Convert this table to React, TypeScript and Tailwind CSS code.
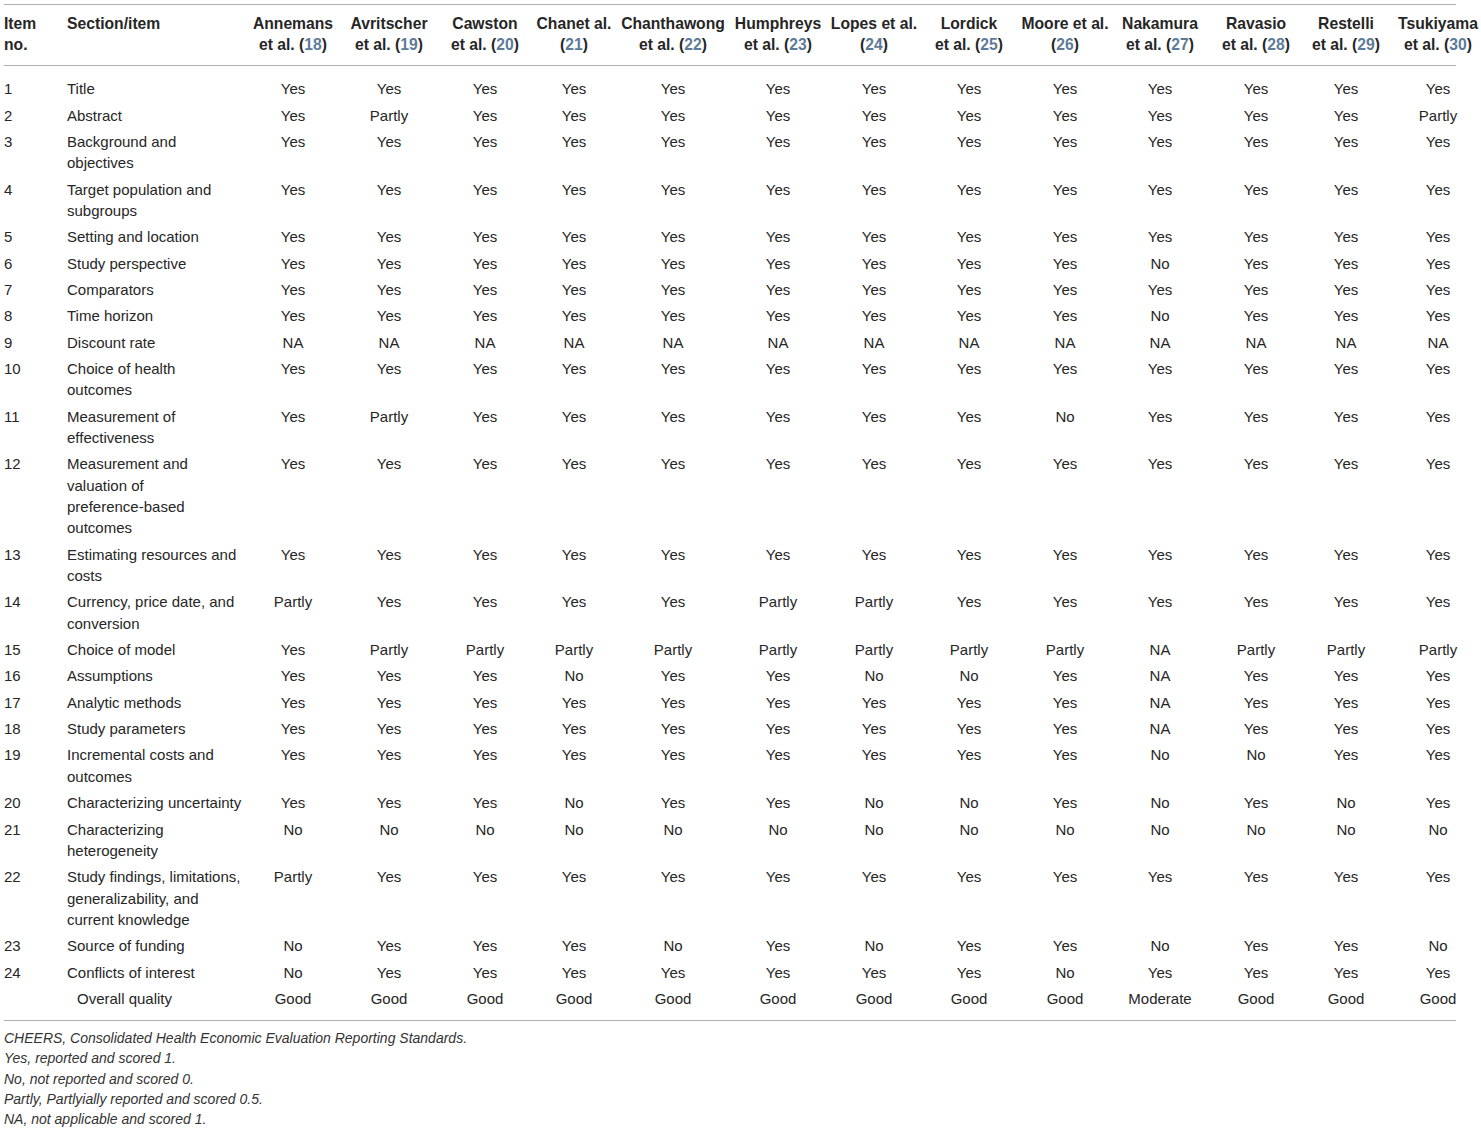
const studies: { name: string; cite: string; ref: string }[] = [
  { name: "Annemans", cite: "et al. (", ref: "18" },
  { name: "Avritscher", cite: "et al. (", ref: "19" },
  { name: "Cawston", cite: "et al. (", ref: "20" },
  { name: "Chanet al.", cite: "(", ref: "21" },
  { name: "Chanthawong", cite: "et al. (", ref: "22" },
  { name: "Humphreys", cite: "et al. (", ref: "23" },
  { name: "Lopes et al.", cite: "(", ref: "24" },
  { name: "Lordick", cite: "et al. (", ref: "25" },
  { name: "Moore et al.", cite: "(", ref: "26" },
  { name: "Nakamura", cite: "et al. (", ref: "27" },
  { name: "Ravasio", cite: "et al. (", ref: "28" },
  { name: "Restelli", cite: "et al. (", ref: "29" },
  { name: "Tsukiyama", cite: "et al. (", ref: "30" },
];

// widths picked so the column centres land where the reference has them
const colWidths = [63, 178, 96, 96, 96, 82, 116, 94, 98, 92, 100, 90, 102, 78, 106];

const Y = "Yes";
const N = "No";
const P = "Partly";
const NA = "NA";
const all = (v: string) => Array(13).fill(v) as string[];

const rows: { no: string; item: string[]; vals: string[] }[] = [
  { no: "1", item: ["Title"], vals: all(Y) },
  { no: "2", item: ["Abstract"], vals: [Y, P, Y, Y, Y, Y, Y, Y, Y, Y, Y, Y, P] },
  { no: "3", item: ["Background and", "objectives"], vals: all(Y) },
  { no: "4", item: ["Target population and", "subgroups"], vals: all(Y) },
  { no: "5", item: ["Setting and location"], vals: all(Y) },
  { no: "6", item: ["Study perspective"], vals: [Y, Y, Y, Y, Y, Y, Y, Y, Y, N, Y, Y, Y] },
  { no: "7", item: ["Comparators"], vals: all(Y) },
  { no: "8", item: ["Time horizon"], vals: [Y, Y, Y, Y, Y, Y, Y, Y, Y, N, Y, Y, Y] },
  { no: "9", item: ["Discount rate"], vals: all(NA) },
  { no: "10", item: ["Choice of health", "outcomes"], vals: all(Y) },
  { no: "11", item: ["Measurement of", "effectiveness"], vals: [Y, P, Y, Y, Y, Y, Y, Y, N, Y, Y, Y, Y] },
  { no: "12", item: ["Measurement and", "valuation of", "preference-based", "outcomes"], vals: all(Y) },
  { no: "13", item: ["Estimating resources and", "costs"], vals: all(Y) },
  { no: "14", item: ["Currency, price date, and", "conversion"], vals: [P, Y, Y, Y, Y, P, P, Y, Y, Y, Y, Y, Y] },
  { no: "15", item: ["Choice of model"], vals: [Y, P, P, P, P, P, P, P, P, NA, P, P, P] },
  { no: "16", item: ["Assumptions"], vals: [Y, Y, Y, N, Y, Y, N, N, Y, NA, Y, Y, Y] },
  { no: "17", item: ["Analytic methods"], vals: [Y, Y, Y, Y, Y, Y, Y, Y, Y, NA, Y, Y, Y] },
  { no: "18", item: ["Study parameters"], vals: [Y, Y, Y, Y, Y, Y, Y, Y, Y, NA, Y, Y, Y] },
  { no: "19", item: ["Incremental costs and", "outcomes"], vals: [Y, Y, Y, Y, Y, Y, Y, Y, Y, N, N, Y, Y] },
  { no: "20", item: ["Characterizing uncertainty"], vals: [Y, Y, Y, N, Y, Y, N, N, Y, N, Y, N, Y] },
  { no: "21", item: ["Characterizing", "heterogeneity"], vals: all(N) },
  { no: "22", item: ["Study findings, limitations,", "generalizability, and", "current knowledge"], vals: [P, Y, Y, Y, Y, Y, Y, Y, Y, Y, Y, Y, Y] },
  { no: "23", item: ["Source of funding"], vals: [N, Y, Y, Y, N, Y, N, Y, Y, N, Y, Y, N] },
  { no: "24", item: ["Conflicts of interest"], vals: [N, Y, Y, Y, Y, Y, Y, Y, N, Y, Y, Y, Y] },
];

const overall = ["Good", "Good", "Good", "Good", "Good", "Good", "Good", "Good", "Good", "Moderate", "Good", "Good", "Good"];

const notes = [
  "CHEERS, Consolidated Health Economic Evaluation Reporting Standards.",
  "Yes, reported and scored 1.",
  "No, not reported and scored 0.",
  "Partly, Partlyially reported and scored 0.5.",
  "NA, not applicable and scored 1.",
];

export default function App() {
  return (
    <div className="w-[1481px] min-h-[1130px] bg-white pt-[4px] pl-[4px] font-['Liberation_Sans','Helvetica_Neue',Arial,sans-serif] text-[#262626]">
      <div className="w-[1452px] border-t border-b border-[#b0b0b0]">
        <table className="w-[1487px] table-fixed border-collapse text-[15px] leading-[21.35px]">
          <colgroup>
            {colWidths.map((w, i) => (
              <col key={i} style={{ width: w }} />
            ))}
          </colgroup>
          <thead>
            <tr className="align-top text-[15.7px]">
              <th className="pt-[8px] pb-[9.5px] text-left font-bold">
                Item
                <br />
                no.
              </th>
              <th className="pt-[8px] pb-[9.5px] text-left font-bold">Section/item</th>
              {studies.map((s) => (
                <th key={s.ref} className="pt-[8px] pb-[9.5px] text-center font-bold whitespace-nowrap">
                  {s.name}
                  <br />
                  {s.cite}
                  <span className="text-[#5d7b99]">{s.ref}</span>)
                </th>
              ))}
            </tr>
            <tr>
              <td colSpan={15} className="p-0">
                <div className="w-[1452px] h-px bg-[#b0b0b0]" />
              </td>
            </tr>
          </thead>
          <tbody>
            {rows.map((r, i) => (
              <tr key={r.no} className="align-top">
                <td className={i === 0 ? "pt-[12px] pb-[2.5px]" : "py-[2.5px]"}>{r.no}</td>
                <td className={i === 0 ? "pt-[12px] pb-[2.5px]" : "py-[2.5px]"}>
                  {r.item.map((l, k) => (
                    <div key={k} className="whitespace-nowrap">
                      {l}
                    </div>
                  ))}
                </td>
                {r.vals.map((v, k) => (
                  <td key={k} className={i === 0 ? "pt-[12px] pb-[2.5px] text-center" : "py-[2.5px] text-center"}>
                    {v}
                  </td>
                ))}
              </tr>
            ))}
            <tr className="align-top">
              <td colSpan={2} className="pt-[2.5px] pb-[11px] text-center">
                Overall quality
              </td>
              {overall.map((v, k) => (
                <td key={k} className="pt-[2.5px] pb-[11px] text-center">
                  {v}
                </td>
              ))}
            </tr>
          </tbody>
        </table>
      </div>
      <div className="pt-[7px] text-[14px] leading-[20.2px] italic text-[#333]">
        {notes.map((n) => (
          <div key={n}>{n}</div>
        ))}
      </div>
    </div>
  );
}
